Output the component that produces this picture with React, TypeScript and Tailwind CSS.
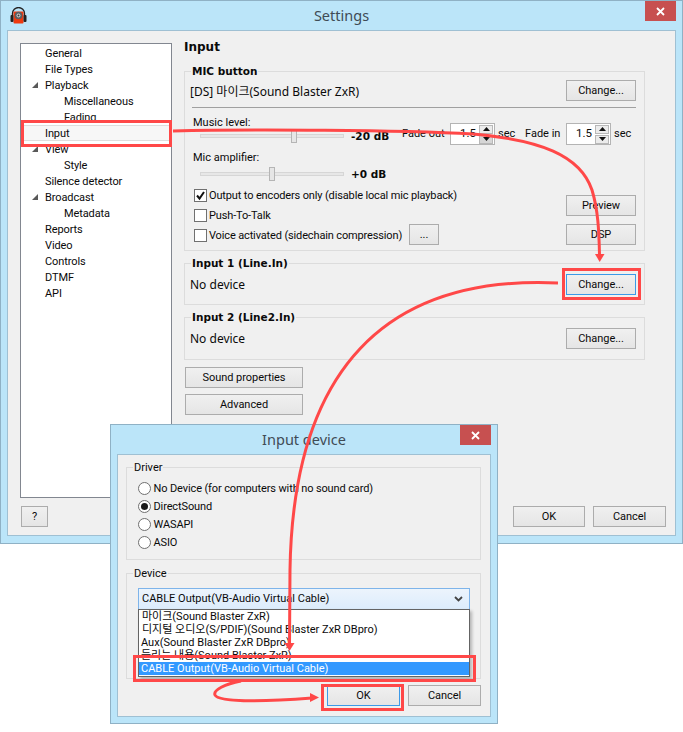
import React from "react";

const font = { fontFamily: 'Roboto,"Noto Sans CJK KR",sans-serif' };
const noto = { fontFamily: '"Noto Sans","Noto Sans CJK KR",sans-serif' };

function Btn({ children, className = "", focus = false }: { children: React.ReactNode; className?: string; focus?: boolean }) {
  return (
    <div
      className={`flex h-[21px] shrink-0 items-center justify-center border bg-gradient-to-b from-[#f0f0f0] to-[#e5e5e5] pt-[2px] text-[11px] tracking-[-0.05px] text-[#0a0a0a] ${
        focus ? "border-[#3c9ae8]" : "border-[#acacac]"
      } ${className}`}
    >
      {children}
    </div>
  );
}

function Group({ title, bold = false, className = "", children }: { title: string; bold?: boolean; className?: string; children: React.ReactNode }) {
  return (
    <div className={`relative border border-[#dcdcdc] ${className}`}>
      <div
        className={`absolute left-[6px] bg-[#f0f0f0] px-[1px] leading-[15px] text-[#0a0a0a] ${
          bold ? "-top-[8px] text-[10.5px] font-bold [font-family:'DejaVu_Sans',sans-serif]" : "-top-[8px] text-[11px]"
        }`}
      >
        {title}
      </div>
      {children}
    </div>
  );
}

const tree: [string, number, boolean][] = [
  ["General", 0, false],
  ["File Types", 0, false],
  ["Playback", 0, true],
  ["Miscellaneous", 1, false],
  ["Fading", 1, false],
  ["Input", 0, false],
  ["View", 0, true],
  ["Style", 1, false],
  ["Silence detector", 0, false],
  ["Broadcast", 0, true],
  ["Metadata", 1, false],
  ["Reports", 0, false],
  ["Video", 0, false],
  ["Controls", 0, false],
  ["DTMF", 0, false],
  ["API", 0, false],
];

function TreeRow({ label, level, arrow }: { label: string; level: number; arrow: boolean }) {
  const sel = label === "Input";
  return (
    <div
      className={`relative flex h-[16px] items-center pt-[2px] text-[11px] tracking-[-0.1px] text-[#0a0a0a] ${level ? "pl-[43px]" : "pl-[24px]"} ${
        sel ? "border-y border-[#dedede] bg-[#f7f7f7]" : ""
      }`}
    >
      {arrow && (
        <svg className="absolute left-[11px] top-[5px]" width="6" height="6" viewBox="0 0 6 6">
          <path d="M6 0V6H0Z" fill="#595959" />
        </svg>
      )}
      {label}
    </div>
  );
}

function Slider({ thumb }: { thumb: string }) {
  return (
    <div className="relative ml-[10px] h-[14px] w-[144px]">
      <div className="absolute left-0 right-0 top-[5px] h-[4px] border border-[#d6d6d6] bg-[#e7e7e7]" />
      <div className={`absolute top-0 h-[14px] w-[6px] border border-[#b5b5b5] bg-[#e6e6e6] ${thumb}`} />
    </div>
  );
}

function Spin({ dark = false }: { dark?: boolean }) {
  return (
    <div className="flex h-[22px] w-[45px] shrink-0 items-center justify-between border border-[#b4b4b4] bg-white pl-[9px] pr-[1px] text-[11.5px] text-[#0a0a0a]">
      <span>1.5</span>
      <div className="flex flex-col gap-[1px]">
        <div className="flex h-[9px] w-[14px] items-center justify-center border border-[#b8b8b8] bg-[#ececec]">
          <svg width="7" height="4" viewBox="0 0 7 4"><path d="M3.500 0L7 4H0Z" fill="#111" /></svg>
        </div>
        <div className={`flex h-[9px] w-[14px] items-center justify-center border border-[#b8b8b8] ${dark ? "bg-[#d6d6d6]" : "bg-[#ececec]"}`}>
          <svg width="7" height="4" viewBox="0 0 7 4"><path d="M0 0H7L3.500 4Z" fill="#111" /></svg>
        </div>
      </div>
    </div>
  );
}

function Check({ label, checked = false, className = "" }: { label: string; checked?: boolean; className?: string }) {
  return (
    <div className={`flex h-[20px] items-center whitespace-nowrap text-[11px] tracking-[-0.14px] text-[#0a0a0a] ${className}`}>
      <div className="ml-[4px] mr-[2px] flex h-[13px] w-[13px] shrink-0 items-center justify-center border border-[#707070] bg-white">
        {checked && (
          <svg width="11" height="11" viewBox="0 0 11 11">
            <path d="M2 5.500L4.500 8.500L9 2" fill="none" stroke="#111" strokeWidth="2" />
          </svg>
        )}
      </div>
      <span className="pt-[2px]">{label}</span>
    </div>
  );
}

function Radio({ label, on = false }: { label: string; on?: boolean }) {
  return (
    <div className="flex h-[18px] items-center text-[11px] tracking-[-0.12px] text-[#0a0a0a]">
      <div className="mr-[2.5px] flex h-[13px] w-[13px] items-center justify-center rounded-full border border-[#707070] bg-white">
        {on && <div className="h-[7px] w-[7px] rounded-full bg-[#1a1a1a]" />}
      </div>
      <span className="pt-[2px]">{label}</span>
    </div>
  );
}

function CloseX({ className = "" }: { className?: string }) {
  return (
    <div className={`flex items-center justify-center bg-[#c75050] ${className}`}>
      <svg width="9" height="9" viewBox="0 0 9 9">
        <path d="M1 1L8 8M8 1L1 8" stroke="#fff" strokeWidth="1.800" />
      </svg>
    </div>
  );
}

function AppIcon() {
  return (
    <svg className="ml-[9px] mt-[6px]" width="17" height="17" viewBox="0 0 17 17">
      <path d="M2.500 9V6.500a6 6 0 0 1 12 0V9" fill="none" stroke="#222" strokeWidth="1.300" />
      <rect x="3.500" y="4.500" width="10" height="12" rx="1" fill="#ee3a10" />
      <rect x="0.500" y="8" width="3" height="7" rx="1" fill="#222" />
      <rect x="13.500" y="8" width="3" height="7" rx="1" fill="#222" />
      <circle cx="8.500" cy="8.500" r="3.800" fill="#5b5f63" />
      <circle cx="8.500" cy="8.500" r="2" fill="#c9ccce" />
      <circle cx="8.500" cy="8.500" r="1" fill="#3a3a3a" />
    </svg>
  );
}

const items = [
  { t: "마이크(Sound Blaster ZxR)", x: "pl-[3px]" },
  { t: "디지털 오디오(S/PDIF)(Sound Blaster ZxR DBpro)", x: "pl-[3px]" },
  { t: "Aux(Sound Blaster ZxR DBpro)", x: "pl-[2px]" },
  { t: "들리는 내용(Sound Blaster ZxR)", x: "pl-[2px]" },
];

function Annotations() {
  const red = "#ff4848";
  return (
    <svg className="pointer-events-none absolute left-0 top-0" width="683" height="732" viewBox="0 0 683 732">
      <g fill="none" stroke={red} strokeWidth="3">
        <rect x="22.500" y="121.500" width="148" height="24" />
        <rect x="563.500" y="269.500" width="76" height="29" />
        <rect x="134.500" y="656.500" width="340" height="24" />
        <rect x="322.500" y="685.500" width="80" height="24" />
        <path d="M173 131C250 129 400 130 473 134C540 140 580 155 592 190C598 210 599 230 599.500 255" />
        <path d="M558 283C385 275 293 370 290 570L289.500 645" />
        <path d="M241 681C225 684 213 690 215 695C218 702 260 702 312 698" />
      </g>
      <path d="M595 254H604.500L599.700 262Z" fill={red} />
      <path d="M284.500 643H294.500L289.500 651Z" fill={red} />
      <path d="M310 693L319 697.500L310 702Z" fill={red} />
    </svg>
  );
}

export default function App() {
  return (
    <div className="relative h-[732px] w-[683px] overflow-hidden bg-white" style={font}>
      {/* Settings window */}
      <div className="relative flex h-[544px] w-[683px] flex-col border border-[#8fb1c5] bg-[#bbe5f9]">
        <div className="relative flex h-[29px] shrink-0">
          <AppIcon />
          <div className="absolute left-0 right-0 top-[4px] text-center text-[14.5px] leading-[20px] text-[#3f4b55]" style={noto}>Settings</div>
          <CloseX className="absolute right-[6px] top-0 h-[20px] w-[31px]" />
        </div>
        <div className="mx-[6px] mb-[7px] flex flex-1 flex-col border border-[#9fc0d3] bg-[#f0f0f0] pl-[12px] pt-[12px]">
          <div className="flex h-[455px] gap-[12px]">
            <div className="w-[152px] border border-[#828790] bg-white pt-[1px]">
              {tree.map(([l, lv, a]) => (
                <TreeRow key={l} label={l} level={lv} arrow={a} />
              ))}
            </div>
            <div className="w-[461px]">
              <div className="h-[28px] text-[12px] font-bold leading-[8px] text-[#0a0a0a] [font-family:'DejaVu_Sans',sans-serif]">Input</div>
              <Group title="MIC button" bold className="h-[180px] pl-[5px] pr-[8px] pt-[8px]">
                <div className="flex h-[21px] items-center justify-between text-[12px] text-[#0a0a0a]">
                  <span className="pt-[2px]" style={noto}>[DS] 마이크(Sound Blaster ZxR)</span>
                  <Btn className="w-[70px]">Change...</Btn>
                </div>
                <div className="ml-[2px] mt-[6px] h-[1px] bg-[#a0a0a0]" />
                <div className="mt-[6px] flex h-[31px] text-[11px] text-[#0a0a0a]">
                  <div className="w-[212px]">
                    <div className="ml-[3px] h-[15px] pt-[1px] leading-[15px]">Music level:</div>
                    <div className="flex h-[14px] items-center">
                      <Slider thumb="left-[91px]" />
                      <span className="ml-[7px] text-[10.5px] font-bold leading-[14px] [font-family:'DejaVu_Sans',sans-serif]">-20 dB</span>
                    </div>
                  </div>
                  <div className="mt-[9px] flex h-[22px] items-center">
                    <span className="w-[48px]">Fade out</span>
                    <Spin dark />
                    <span className="ml-[3px] w-[27px]">sec</span>
                    <span className="w-[41px]">Fade in</span>
                    <Spin />
                    <span className="ml-[3px]">sec</span>
                  </div>
                </div>
                <div className="mt-[4px] h-[18px] text-[11px] leading-[16px] text-[#0a0a0a]">
                  <div className="ml-[3px] pt-[1px]">Mic amplifier:</div>
                </div>
                <div className="flex h-[14px] items-center text-[#0a0a0a]">
                  <Slider thumb="left-[69px]" />
                  <span className="ml-[7px] text-[10.5px] font-bold leading-[14px] [font-family:'DejaVu_Sans',sans-serif]">+0 dB</span>
                </div>
                <div className="mt-[4px] flex">
                  <div className="flex-1">
                    <Check label="Output to encoders only (disable local mic playback)" checked />
                    <Check label="Push-To-Talk" />
                    <div className="flex h-[20px] items-end">
                      <div className="w-[219px]">
                        <Check label="Voice activated (sidechain compression)" />
                      </div>
                      <Btn className="w-[30px]">...</Btn>
                    </div>
                  </div>
                  <div className="flex w-[70px] flex-col justify-end gap-[8px]">
                    <Btn>Preview</Btn>
                    <Btn>DSP</Btn>
                  </div>
                </div>
              </Group>
              <Group title="Input 1 (Line.In)" bold className="mt-[12px] flex h-[42px] items-center justify-between pl-[5px] pr-[8px]">
                <span className="pt-[2px] text-[12px] text-[#0a0a0a]" style={noto}>No device</span>
                <Btn focus className="w-[70px]">Change...</Btn>
              </Group>
              <Group title="Input 2 (Line2.In)" bold className="mt-[12px] flex h-[43px] items-center justify-between pl-[5px] pr-[8px]">
                <span className="text-[12px] text-[#0a0a0a]" style={noto}>No device</span>
                <Btn className="w-[70px]">Change...</Btn>
              </Group>
              <Btn className="ml-[1px] mt-[7px] w-[118px]">Sound properties</Btn>
              <Btn className="ml-[1px] mt-[6px] w-[118px]">Advanced</Btn>
            </div>
          </div>
          <div className="mt-[8px] flex">
            <Btn className="ml-[1px] w-[27px]">?</Btn>
            <Btn className="ml-[465px] w-[72px]">OK</Btn>
            <Btn className="ml-[8px] w-[73px]">Cancel</Btn>
          </div>
        </div>
      </div>

      {/* Input device dialog */}
      <div className="absolute left-[110px] top-[424px] flex h-[300px] w-[388px] flex-col border border-[#8fb1c5] bg-[#bbe5f9]">
        <div className="relative h-[29px] shrink-0">
          <div className="absolute left-0 right-0 top-[4px] text-center text-[14.5px] leading-[20px] text-[#3f4b55]" style={noto}>Input device</div>
          <CloseX className="absolute right-[6px] top-0 h-[20px] w-[31px]" />
        </div>
        <div className="mx-[6px] mb-[6px] flex-1 border border-[#9fc0d3] bg-[#f0f0f0] pl-[8px] pt-[12px]">
          <Group title="Driver" className="h-[93px] w-[355px] pl-[11px] pt-[11px]">
            <Radio label="No Device (for computers with no sound card)" />
            <Radio label="DirectSound" on />
            <Radio label="WASAPI" />
            <Radio label="ASIO" />
          </Group>
          <Group title="Device" className="mt-[13px] h-[106px] w-[355px] pl-[11px] pt-[14px]">
            <div className="relative h-[22px] w-[332px]">
              <div className="flex h-[22px] items-center justify-between border border-[#7eb4ea] bg-gradient-to-b from-[#ecf4fc] to-[#dcecfc] pl-[3px] pr-[6px] text-[11px] text-[#0a0a0a]">
                <span className="pt-[1px]">CABLE Output(VB-Audio Virtual Cable)</span>
                <svg width="9" height="6" viewBox="0 0 9 6">
                  <path d="M1 1L4.500 4.500L8 1" fill="none" stroke="#444" strokeWidth="1.800" />
                </svg>
              </div>
              <div className="absolute left-0 top-[21px] w-[332px] border border-[#646464] bg-white pb-[1px] leading-[13px] shadow-[2px_2px_3px_rgba(0,0,0,0.25)]">
                {items.map((i) => (
                  <div key={i.t} className={`h-[13px] whitespace-nowrap text-[11px] leading-[13px] text-[#0a0a0a] ${i.x}`}>
                    {i.t}
                  </div>
                ))}
                <div className="h-[13px] bg-[#3399ff] pl-[2px] text-[11px] leading-[13px] text-white">CABLE Output(VB-Audio Virtual Cable)</div>
              </div>
            </div>
          </Group>
          <div className="ml-[201px] mt-[6px] flex gap-[8px]">
            <Btn focus className="w-[73px]">OK</Btn>
            <Btn className="w-[73px]">Cancel</Btn>
          </div>
        </div>
      </div>

      <Annotations />
    </div>
  );
}
